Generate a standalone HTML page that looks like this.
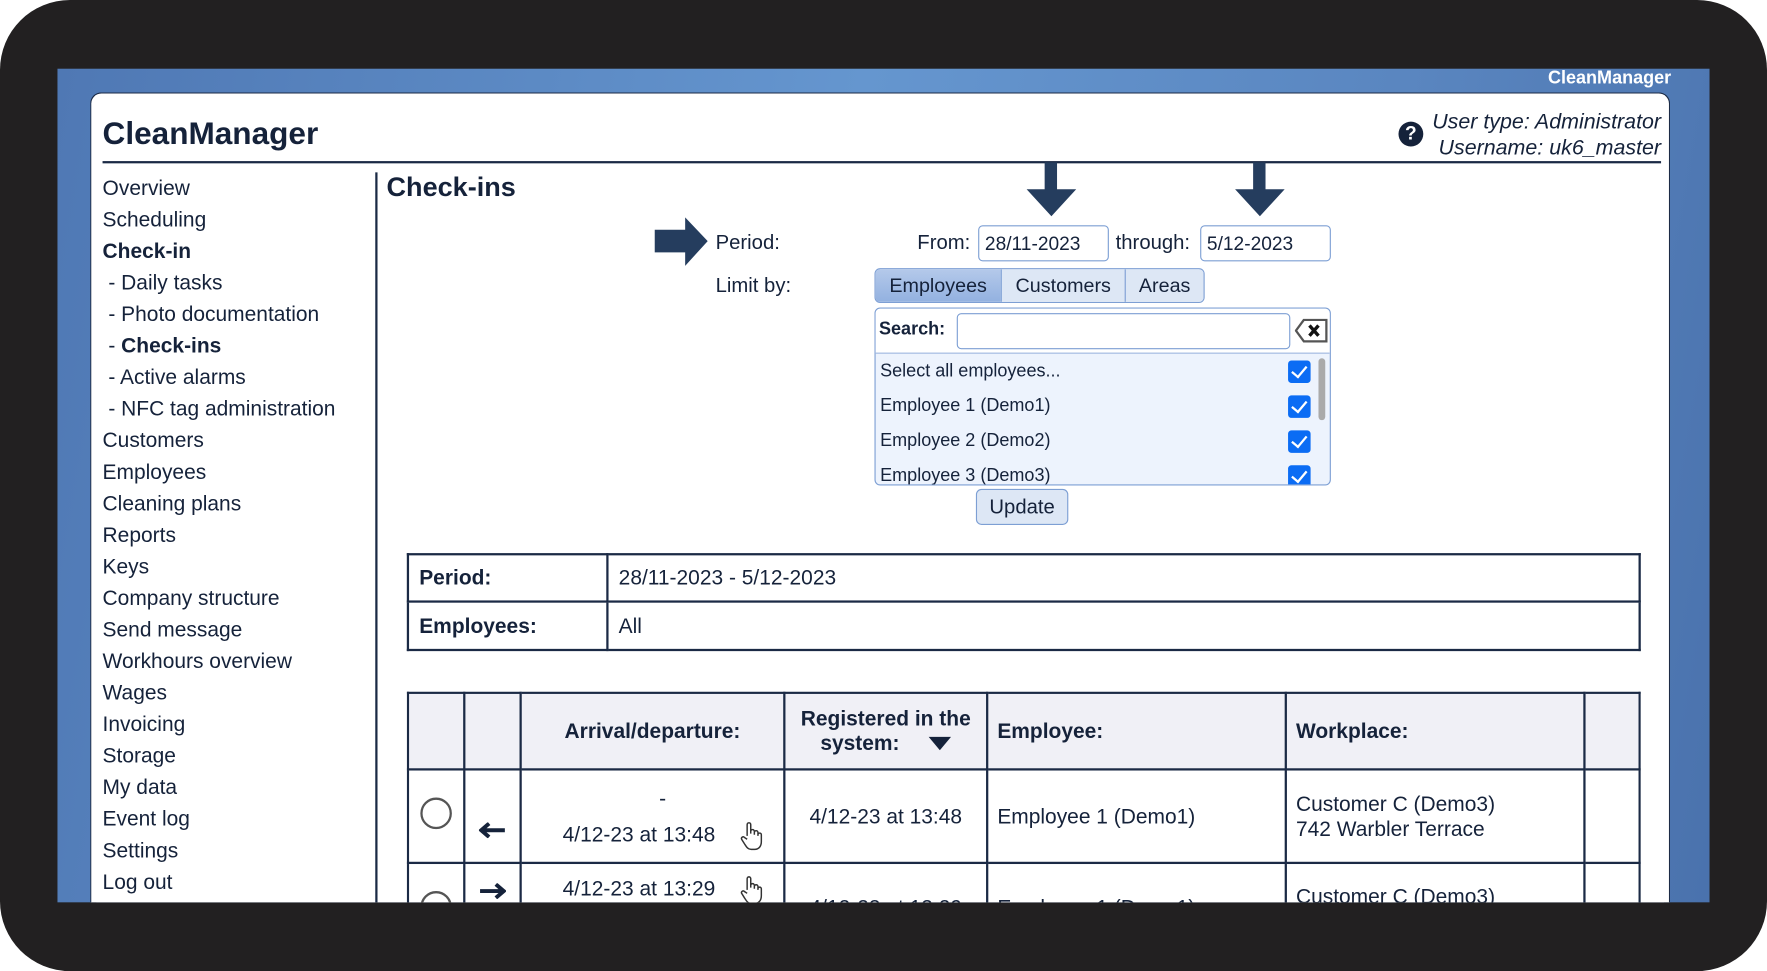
<!DOCTYPE html>
<html><head><meta charset="utf-8"><style>
*{margin:0;padding:0;box-sizing:border-box}
html,body{width:1767px;height:971px;overflow:hidden;background:#fff}
#w{position:absolute;left:0;top:0;width:1568px;height:862px;transform:scale(1.12691,1.1265);transform-origin:0 0;font-family:"Liberation Sans",Arial,sans-serif;color:#15223a}
.a{position:absolute;white-space:nowrap}
.frame{left:0;top:0;width:1568px;height:862px;background:#222021;border-radius:62px}
.blue{left:51px;top:61px;width:1466px;height:740px;background:linear-gradient(100deg,#4f78b4 0%,#6596cf 45%,#5a86c0 75%,#4a72ad 100%)}
.panel{left:80px;top:82px;width:1402px;height:719px;background:#fff;border:1px solid #1b2a45;border-bottom:none;border-radius:10px 10px 0 0}
.nav div{position:absolute;left:91px;font-size:18.6px;white-space:nowrap}
.inp{position:absolute;border:1px solid #7d9fd4;border-radius:4px;background:#fff;font-size:17px;padding:6px 5px}
.cb{position:absolute;left:1143px;width:20px;height:20px;background:#0b6cf4;border-radius:3px}
.cb:after{content:"";position:absolute;left:6px;top:2px;width:6px;height:11px;border:solid #fff;border-width:0 2.5px 2.5px 0;transform:rotate(40deg)}
.li{position:absolute;left:781px;font-size:16px}
table{border-collapse:collapse;position:absolute}
td,th{border:2px solid #1b2a45;font-size:18.6px}
.hand{display:inline-block;vertical-align:middle;margin-left:22px}
</style></head><body><div id="w">
<div class="a frame"></div>
<div class="a blue"></div>
<div class="a" style="right:85px;top:61px;color:#fff;font-weight:bold;font-size:16px">CleanManager</div>
<div class="a panel"></div>
<div class="a" style="left:91px;top:103px;font-size:28px;font-weight:bold">CleanManager</div>
<div class="a" style="left:91px;top:143px;width:1383px;height:2px;background:#1b2a45"></div>
<div class="a" style="left:1241px;top:108px;width:22px;height:22px;border-radius:50%;background:#15223a;color:#fff;font-weight:bold;font-size:17px;text-align:center;line-height:22px">?</div>
<div class="a" style="right:94px;top:97px;font-size:19px;font-style:italic;text-align:right;line-height:23px">User type: Administrator<br>Username: uk6_master</div>
<div class="nav">
<div style="top:156px">Overview</div><div style="top:184px">Scheduling</div><div style="top:212px;font-weight:bold">Check-in</div>
<div style="top:240px">&nbsp;- Daily tasks</div><div style="top:268px">&nbsp;- Photo documentation</div><div style="top:296px">&nbsp;- <b>Check-ins</b></div>
<div style="top:324px">&nbsp;- Active alarms</div><div style="top:352px">&nbsp;- NFC tag administration</div>
<div style="top:380px">Customers</div><div style="top:408px">Employees</div><div style="top:436px">Cleaning plans</div><div style="top:464px">Reports</div><div style="top:492px">Keys</div><div style="top:520px">Company structure</div><div style="top:548px">Send message</div><div style="top:576px">Workhours overview</div><div style="top:604px">Wages</div><div style="top:632px">Invoicing</div><div style="top:660px">Storage</div><div style="top:688px">My data</div><div style="top:716px">Event log</div><div style="top:744px">Settings</div><div style="top:772px">Log out</div>
</div>
<div class="a" style="left:333px;top:153px;width:1.5px;height:648px;background:#1b2a45"></div>
<div class="a" style="left:343px;top:153px;font-size:24px;font-weight:bold">Check-ins</div>
<svg class="a" style="left:580px;top:192px" width="50" height="45"><path d="M1 12H28V1L48 22L28 44V32H1Z" fill="#253d5e"/></svg>
<svg class="a" style="left:910px;top:144px" width="46" height="50"><path d="M17 0H28V24H45L23 48L1 24H17Z" fill="#253d5e"/></svg>
<svg class="a" style="left:1095px;top:144px" width="46" height="50"><path d="M17 0H28V24H45L23 48L1 24H17Z" fill="#253d5e"/></svg>
<div class="a" style="left:635px;top:205px;font-size:18px">Period:</div>
<div class="a" style="left:635px;top:243px;font-size:18px">Limit by:</div>
<div class="a" style="left:814px;top:205px;font-size:18px">From:</div>
<div class="inp" style="left:868px;top:200px;width:116px;height:32px">28/11-2023</div>
<div class="a" style="left:990px;top:205px;font-size:18px">through:</div>
<div class="inp" style="left:1065px;top:200px;width:116px;height:32px">5/12-2023</div>
<div class="a" style="left:776px;top:238px;width:293px;height:31px;border:1px solid #7d9fd4;border-radius:5px;overflow:hidden;font-size:17.5px;display:flex">
<div style="width:111px;background:linear-gradient(#b4c9ea,#93b1e0);text-align:center;line-height:29px">Employees</div>
<div style="width:110px;background:#dde7f5;border-left:1px solid #7d9fd4;text-align:center;line-height:29px">Customers</div>
<div style="flex:1;background:#dde7f5;border-left:1px solid #7d9fd4;text-align:center;line-height:29px">Areas</div></div>
<div class="a" style="left:776px;top:273px;width:405px;height:158px;border:1px solid #7d9fd4;border-radius:5px;background:#edf3fd;overflow:hidden">
<div style="height:40px;background:#fff;border-bottom:1px solid #9db6df"></div></div>
<div class="a" style="left:780px;top:284px;font-size:16px;font-weight:bold">Search:</div>
<div class="inp" style="left:849px;top:278px;width:296px;height:32px"></div>
<svg class="a" style="left:1149px;top:283px" width="30" height="21"><path d="M8 1H28V20H8L1 10.5Z" fill="#fff" stroke="#555" stroke-width="2"/><path d="M13 6L21 15M21 6L13 15" stroke="#111" stroke-width="3"/></svg>
<div class="li" style="top:321px">Select all employees...</div>
<div class="li" style="top:352px">Employee 1 (Demo1)</div>
<div class="li" style="top:383px">Employee 2 (Demo2)</div>
<div class="li" style="top:414px;height:16px;overflow:hidden">Employee 3 (Demo3)</div>
<div class="cb" style="top:320px"></div><div class="cb" style="top:351px"></div><div class="cb" style="top:382px"></div>
<div class="cb" style="top:413px;height:17px;border-radius:3px 3px 0 0"></div>
<div class="a" style="left:1170px;top:318px;width:6px;height:55px;border-radius:3px;background:#aaa"></div>
<div class="a" style="left:866px;top:434px;width:82px;height:32px;border:1px solid #7d9fd4;border-radius:5px;background:#dde7f5;font-size:18px;text-align:center;line-height:30px">Update</div>
<table style="left:361px;top:491px;width:1095px">
<tr style="height:42px"><td style="width:177px;padding-left:9px;font-weight:bold">Period:</td><td style="padding-left:9px">28/11-2023 - 5/12-2023</td></tr>
<tr style="height:43px"><td style="padding-left:9px;font-weight:bold">Employees:</td><td style="padding-left:9px">All</td></tr></table>
<div class="a" style="left:361px;top:614px;width:1095px;height:187px;overflow:hidden">
<table style="left:0;top:0;width:1095px">
<tr style="height:68px;background:#f0f0f6"><th style="width:50px"></th><th style="width:50px"></th><th style="width:234px">Arrival/departure:</th><th style="width:180px;line-height:22px">Registered in the<br>system: &nbsp;&nbsp;&nbsp;&nbsp;<svg width="20" height="12"><path d="M0 0H20L10 12Z" fill="#15223a"/></svg></th><th style="width:265px;text-align:left;padding-left:8px">Employee:</th><th style="width:265px;text-align:left;padding-left:8px">Workplace:</th><th></th></tr>
<tr style="height:83px"><td style="text-align:center"><span style="display:inline-block;width:28px;height:28px;border:2px solid #555;border-radius:50%"></span></td><td style="text-align:center;vertical-align:bottom;padding-bottom:16px"><svg width="24" height="14"><path d="M2 7H23M9 1L2 7L9 13" stroke="#15223a" stroke-width="3.5" fill="none"/></svg></td><td style="text-align:center;line-height:32px;padding-left:18px">-<br>4/12-23 at 13:48<svg class="hand" width="20" height="26" viewBox="0 0 20 26"><path d="M6 13V3a1.6 1.6 0 0 1 3.2 0v8V9a1.6 1.6 0 0 1 3.2 0v3V10a1.6 1.6 0 0 1 3.2 0v3v-1a1.5 1.5 0 0 1 3 0v6c0 4-2 7-6 7h-3c-3 0-4-2-6-5l-2.5-4a1.5 1.5 0 0 1 2.5-1.6L6 16" fill="#fff" stroke="#333" stroke-width="1.3"/></svg></td><td style="text-align:center">4/12-23 at 13:48</td><td style="padding-left:8px">Employee 1 (Demo1)</td><td style="padding-left:8px;line-height:22px">Customer C (Demo3)<br>742 Warbler Terrace</td><td></td></tr>
<tr style="height:83px;vertical-align:top"><td style="text-align:center;padding-top:24px"><span style="display:inline-block;width:28px;height:28px;border:2px solid #555;border-radius:50%"></span></td><td style="text-align:center;padding-top:14px"><svg width="24" height="14"><path d="M1 7H22M15 1L22 7L15 13" stroke="#15223a" stroke-width="3.5" fill="none"/></svg></td><td style="text-align:center;padding-top:10px;padding-left:18px">4/12-23 at 13:29<svg class="hand" width="20" height="26" viewBox="0 0 20 26"><path d="M6 13V3a1.6 1.6 0 0 1 3.2 0v8V9a1.6 1.6 0 0 1 3.2 0v3V10a1.6 1.6 0 0 1 3.2 0v3v-1a1.5 1.5 0 0 1 3 0v6c0 4-2 7-6 7h-3c-3 0-4-2-6-5l-2.5-4a1.5 1.5 0 0 1 2.5-1.6L6 16" fill="#fff" stroke="#333" stroke-width="1.3"/></svg></td><td style="text-align:center;padding-top:28px">4/12-23 at 13:29</td><td style="padding-left:8px;padding-top:28px">Employee 1 (Demo1)</td><td style="padding-left:8px;padding-top:18px">Customer C (Demo3)</td><td></td></tr>
</table></div>
</div></body></html>
